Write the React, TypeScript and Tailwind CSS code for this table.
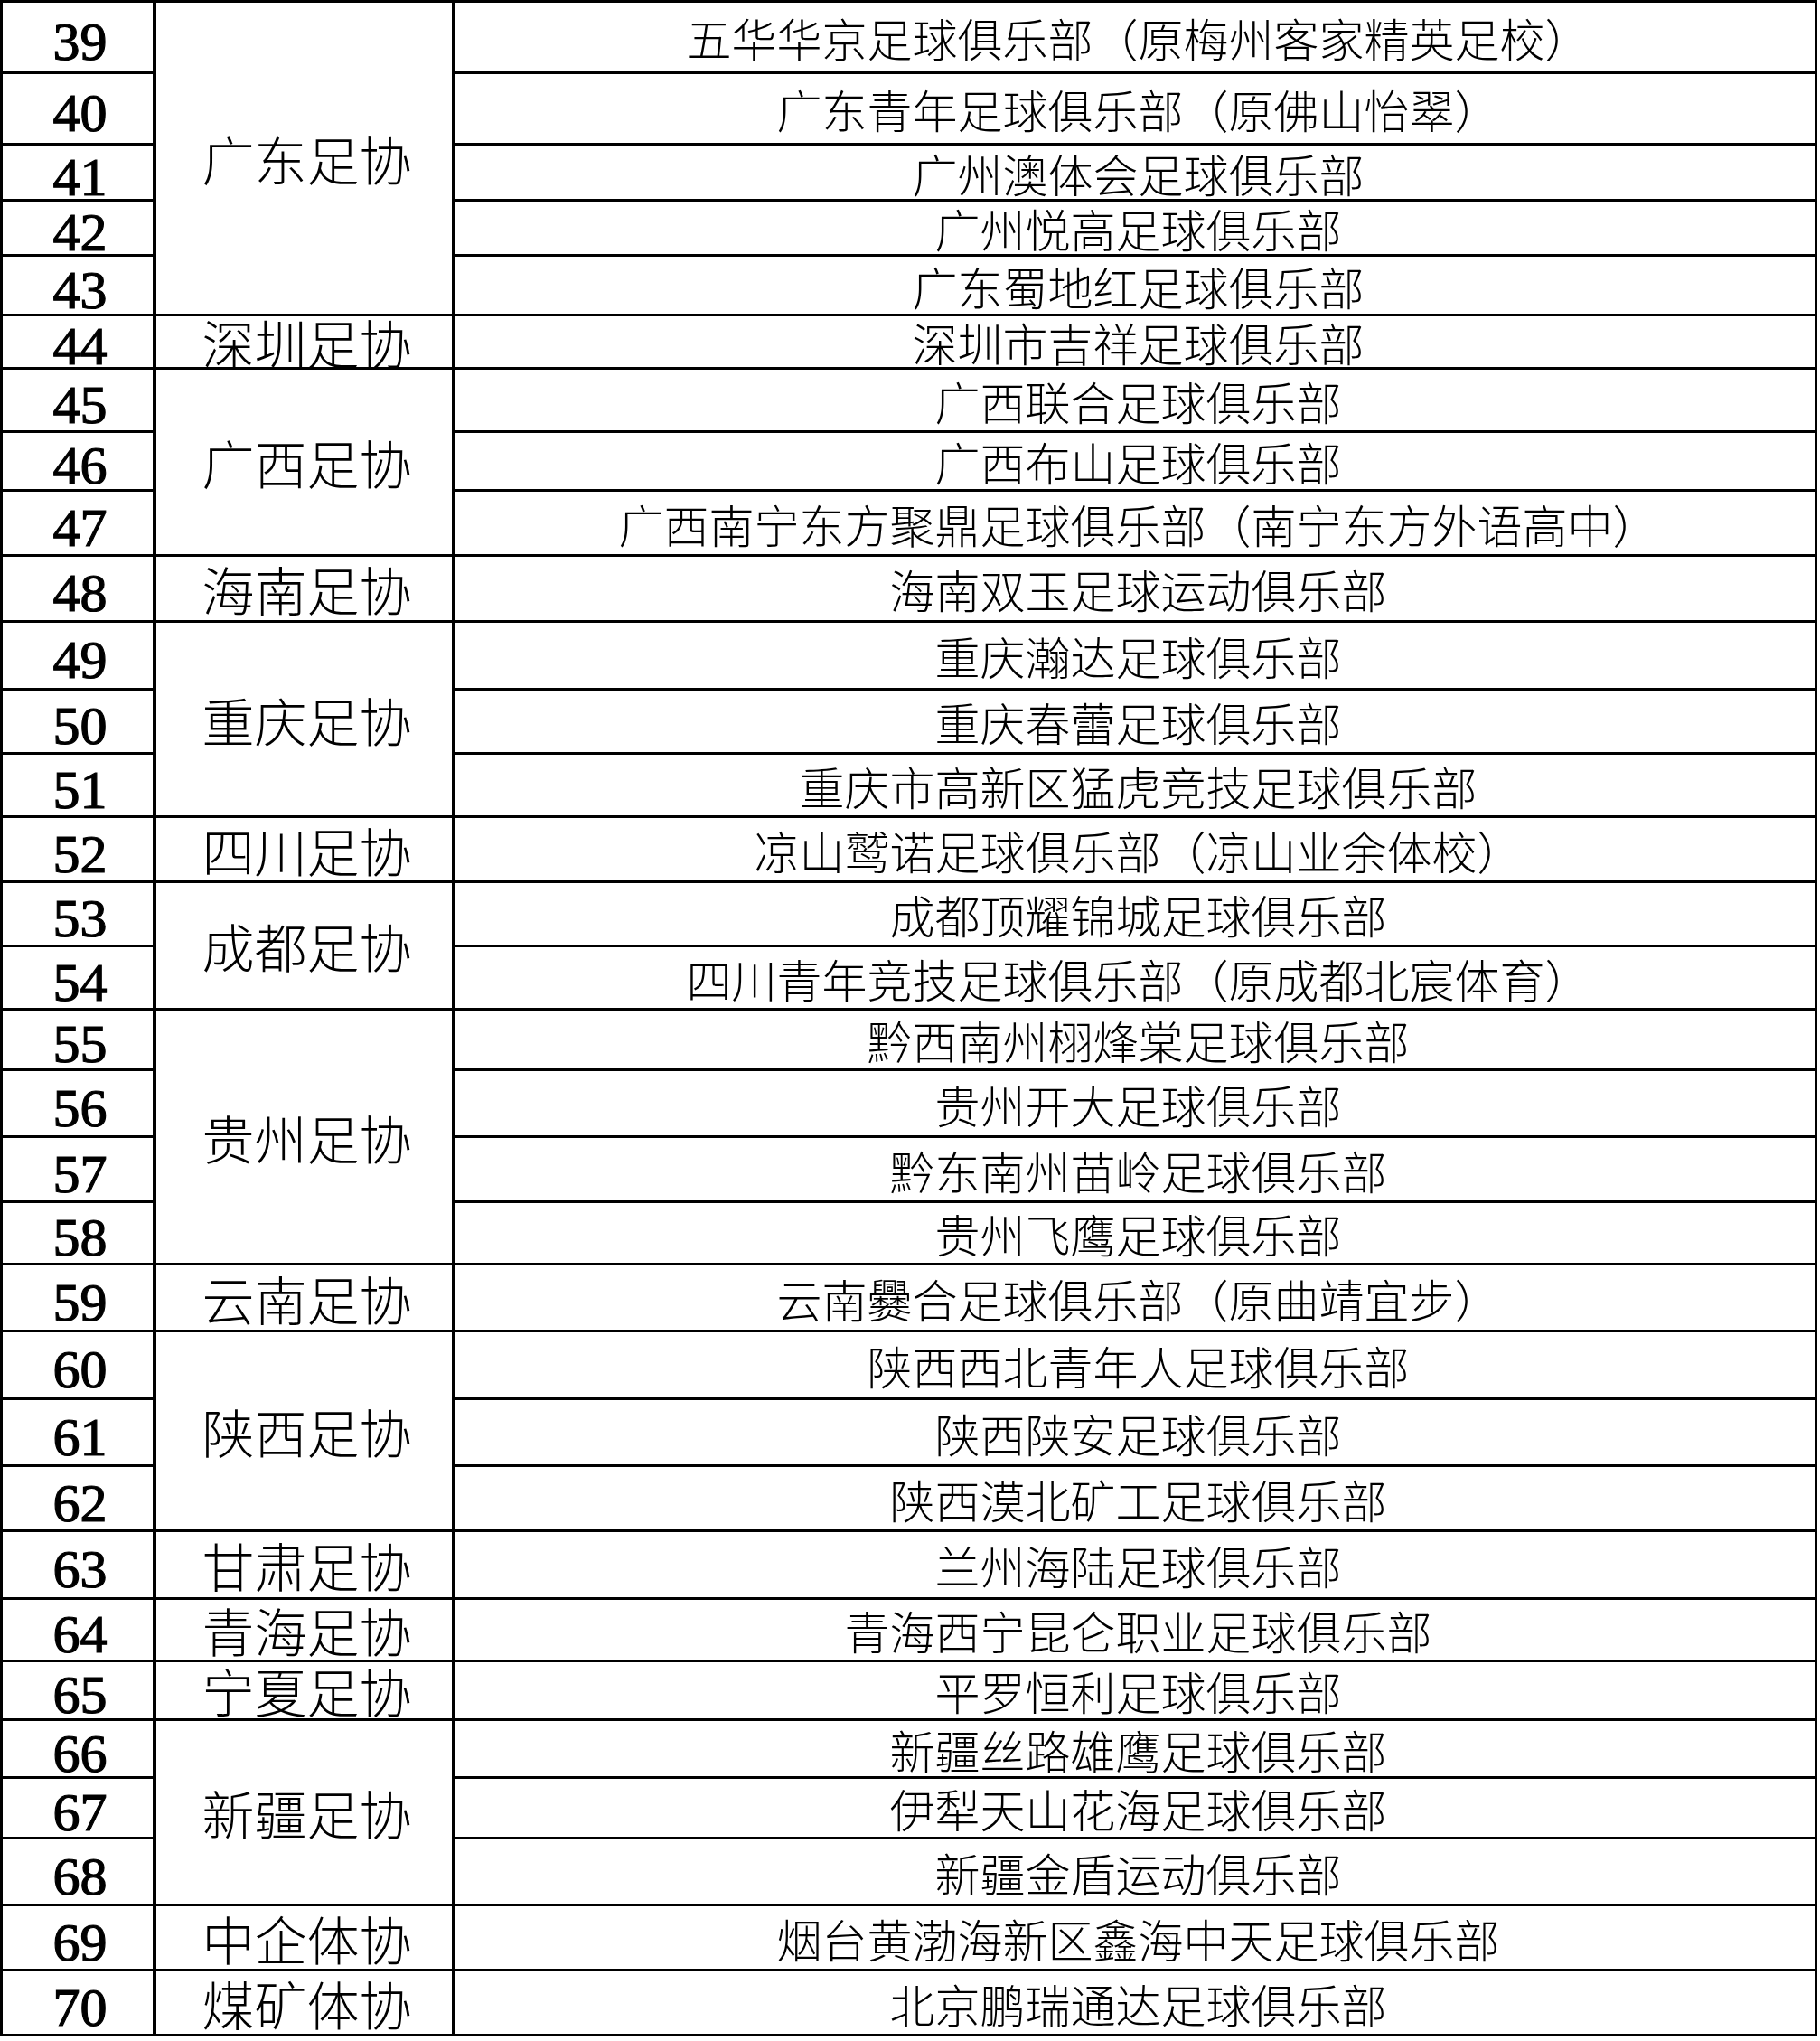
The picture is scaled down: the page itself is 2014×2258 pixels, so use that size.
import React from "react";

type Row = { n: number; club: string };
type Group = { name: string; rows: Row[] };

const groups: Group[] = [
  {
    name: "广东足协",
    rows: [
      { n: 39, club: "五华华京足球俱乐部（原梅州客家精英足校）" },
      { n: 40, club: "广东青年足球俱乐部（原佛山怡翠）" },
      { n: 41, club: "广州澳体会足球俱乐部" },
      { n: 42, club: "广州悦高足球俱乐部" },
      { n: 43, club: "广东蜀地红足球俱乐部" },
    ],
  },
  { name: "深圳足协", rows: [{ n: 44, club: "深圳市吉祥足球俱乐部" }] },
  {
    name: "广西足协",
    rows: [
      { n: 45, club: "广西联合足球俱乐部" },
      { n: 46, club: "广西布山足球俱乐部" },
      { n: 47, club: "广西南宁东方聚鼎足球俱乐部（南宁东方外语高中）" },
    ],
  },
  { name: "海南足协", rows: [{ n: 48, club: "海南双玉足球运动俱乐部" }] },
  {
    name: "重庆足协",
    rows: [
      { n: 49, club: "重庆瀚达足球俱乐部" },
      { n: 50, club: "重庆春蕾足球俱乐部" },
      { n: 51, club: "重庆市高新区猛虎竞技足球俱乐部" },
    ],
  },
  { name: "四川足协", rows: [{ n: 52, club: "凉山鹫诺足球俱乐部（凉山业余体校）" }] },
  {
    name: "成都足协",
    rows: [
      { n: 53, club: "成都顶耀锦城足球俱乐部" },
      { n: 54, club: "四川青年竞技足球俱乐部（原成都北宸体育）" },
    ],
  },
  {
    name: "贵州足协",
    rows: [
      { n: 55, club: "黔西南州栩烽棠足球俱乐部" },
      { n: 56, club: "贵州开大足球俱乐部" },
      { n: 57, club: "黔东南州苗岭足球俱乐部" },
      { n: 58, club: "贵州飞鹰足球俱乐部" },
    ],
  },
  { name: "云南足协", rows: [{ n: 59, club: "云南爨合足球俱乐部（原曲靖宜步）" }] },
  {
    name: "陕西足协",
    rows: [
      { n: 60, club: "陕西西北青年人足球俱乐部" },
      { n: 61, club: "陕西陕安足球俱乐部" },
      { n: 62, club: "陕西漠北矿工足球俱乐部" },
    ],
  },
  { name: "甘肃足协", rows: [{ n: 63, club: "兰州海陆足球俱乐部" }] },
  { name: "青海足协", rows: [{ n: 64, club: "青海西宁昆仑职业足球俱乐部" }] },
  { name: "宁夏足协", rows: [{ n: 65, club: "平罗恒利足球俱乐部" }] },
  {
    name: "新疆足协",
    rows: [
      { n: 66, club: "新疆丝路雄鹰足球俱乐部" },
      { n: 67, club: "伊犁天山花海足球俱乐部" },
      { n: 68, club: "新疆金盾运动俱乐部" },
    ],
  },
  { name: "中企体协", rows: [{ n: 69, club: "烟台黄渤海新区鑫海中天足球俱乐部" }] },
  { name: "煤矿体协", rows: [{ n: 70, club: "北京鹏瑞通达足球俱乐部" }] },
];

const spanClass: Record<number, string> = {
  1: "row-span-1",
  2: "row-span-2",
  3: "row-span-3",
  4: "row-span-4",
  5: "row-span-5",
};

const cjk = "font-['Noto_Sans_CJK_SC','Noto_Sans_CJK_JP',sans-serif]";

export default function App() {
  const cells: React.ReactNode[] = [];
  groups.forEach((g) => {
    g.rows.forEach((r, i) => {
      cells.push(
        <div
          key={`n${r.n}`}
          className="col-start-1 bg-white flex items-center justify-center pt-[10px] pl-[5px] font-['Liberation_Serif',serif] font-normal text-[60px] leading-none text-black [-webkit-text-stroke:1.2px_black]"
        >
          {r.n}
        </div>
      );
      if (i === 0) {
        cells.push(
          <div
            key={`g${r.n}`}
            className={`col-start-2 ${spanClass[g.rows.length]} bg-white flex items-center justify-center overflow-hidden pl-[6px] ${cjk} font-light text-[58px] leading-none text-black whitespace-nowrap`}
          >
            {g.name}
          </div>
        );
      }
      cells.push(
        <div
          key={`c${r.n}`}
          className={`col-start-3 bg-white flex items-center justify-center overflow-hidden pl-[7px] ${cjk} font-light text-[50px] leading-none text-black whitespace-nowrap`}
        >
          {r.club}
        </div>
      );
    });
  });

  return (
    <div className="w-[2014px] h-[2258px] bg-white">
      <div className="inline-grid bg-black p-[3px] gap-x-[4px] gap-y-[3px] grid-cols-[166px_327px_1504px] grid-rows-[76px_76px_59px_58px_63px_56px_67px_62px_69px_70px_72px_68px_67px_69px_68px_67px_64px_71px_69px_66px_71px_72px_71px_69px_72px_66px_62px_61px_64px_71px_69px_69px]">
        {cells}
      </div>
    </div>
  );
}
